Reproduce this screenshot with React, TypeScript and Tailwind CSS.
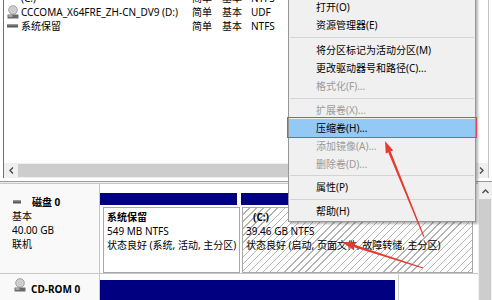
import React from "react";

type Volume = { name: string; layout: string; type: string; fs: string; icon: "disk" | "cd" };

const volumes: Volume[] = [
  { name: "(C:)", layout: "简单", type: "基本", fs: "NTFS", icon: "disk" },
  { name: "CCCOMA_X64FRE_ZH-CN_DV9 (D:)", layout: "简单", type: "基本", fs: "UDF", icon: "cd" },
  { name: "系统保留", layout: "简单", type: "基本", fs: "NTFS", icon: "disk" },
];

type MenuEntry = { label?: string; disabled?: boolean; active?: boolean; sep?: string };

const menu: MenuEntry[] = [
  { label: "打开(O)" },
  { label: "资源管理器(E)" },
  { sep: "h-[7px]" },
  { label: "将分区标记为活动分区(M)" },
  { label: "更改驱动器号和路径(C)..." },
  { label: "格式化(F)...", disabled: true },
  { sep: "h-[6px]" },
  { label: "扩展卷(X)...", disabled: true },
  { label: "压缩卷(H)...", active: true },
  { label: "添加镜像(A)...", disabled: true },
  { label: "删除卷(D)...", disabled: true },
  { sep: "h-[5px]" },
  { label: "属性(P)" },
  { sep: "h-[6px]" },
  { label: "帮助(H)" },
];

function CdIcon() {
  return (
    <svg width="12" height="14" viewBox="0 0 12 14">
      <circle cx="6" cy="5" r="4.3" fill="#d2d2d2" stroke="#8c8c8c" strokeWidth="0.8" />
      <circle cx="6" cy="5" r="1.2" fill="#fff" stroke="#8c8c8c" strokeWidth="0.5" />
      <rect x="0.5" y="9.5" width="11" height="4" rx="0.5" fill="#6a6a6a" />
      <rect x="1.5" y="10.5" width="4" height="1" fill="#e4e4e4" />
    </svg>
  );
}

function DiskIcon({ w = 11 }: { w?: number }) {
  return (
    <svg width={w} height="4" viewBox={`0 0 ${w} 4`}>
      <rect x="0" y="0.5" width={w} height="3" fill="#5a5a5a" />
      <rect x="0" y="0.5" width={w} height="1" fill="#8a8a8a" />
    </svg>
  );
}

function Chevron({ dir }: { dir: "left" | "right" | "up" }) {
  const pts = dir === "left" ? "4,0.5 1,3.5 4,6.5" : dir === "right" ? "1,0.5 4,3.5 1,6.5" : "0.5,4 3.5,1 6.5,4";
  const size = dir === "up" ? { w: 7, h: 5 } : { w: 5, h: 7 };
  return (
    <svg width={size.w} height={size.h} viewBox={`0 0 ${size.w} ${size.h}`}>
      <polyline points={pts} fill="none" stroke="#4a4a4a" strokeWidth="1.4" />
    </svg>
  );
}

export default function App() {
  return (
    <div className="relative w-[492px] h-[300px] overflow-hidden bg-white text-[10px] leading-none text-black font-['Noto_Sans','Noto_Sans_CJK_SC',sans-serif]">
      {/* volume list */}
      <div className="ml-[3px] mr-[3px] h-[178px] flex flex-col border-l border-l-[#6f6f6f] border-r border-r-[#c4c4c4]">
        <div className="flex-1 overflow-hidden">
          <div className="-mt-[9px]">
            {volumes.map((v) => (
              <div key={v.name} className="flex h-[14px] items-center">
                <div className="w-[17px] pl-[3px] flex items-center">
                  {v.icon === "cd" ? <CdIcon /> : <DiskIcon />}
                </div>
                <span className="w-[171px] whitespace-nowrap">{v.name}</span>
                <span className="w-[30px]">{v.layout}</span>
                <span className="w-[29px]">{v.type}</span>
                <span>{v.fs}</span>
              </div>
            ))}
          </div>
        </div>
        {/* horizontal scrollbar */}
        <div className="flex h-[15px] items-stretch bg-[#f0f0f0]">
          <div className="w-[14px] flex items-center justify-center">
            <Chevron dir="left" />
          </div>
          <div className="flex-1 my-[1px] bg-[#cdcdcd]" />
          <div className="w-[14px] ml-[8px] flex items-center justify-center">
            <Chevron dir="right" />
          </div>
        </div>
      </div>

      {/* splitter */}
      <div className="h-[5px] flex flex-col">
        <div className="h-[3px] bg-white" />
        <div className="h-[1px] bg-[#9c9c9c]" />
        <div className="h-[1px] bg-[#eeeeee]" />
      </div>

      {/* disk graphical view */}
      <div className="flex h-[117px]">
        <div className="w-[478px] flex flex-col border-t border-[#c8c8c8]">
          {/* disk 0 */}
          <div className="h-[95px] flex border-b border-[#c8c8c8]">
            <div className="w-[100px] border-r border-[#c8c8c8] bg-[#f9f9f9] pt-[11px] leading-[14px]">
              <div className="flex items-center pl-[13px]">
                <DiskIcon w={8} />
                <span className="ml-[11px] font-bold">磁盘 0</span>
              </div>
              <div className="pl-[12px]">基本</div>
              <div className="pl-[12px]">40.00 GB</div>
              <div className="pl-[12px]">联机</div>
            </div>
            <div className="flex-1 flex pt-[9px]">
              <div className="w-[140px] flex flex-col">
                <div className="h-[12px] mr-[3px] bg-[#000080]" />
                <div className="mt-[2px] ml-[3px] h-[66px] border border-[#a8a8a8] bg-white pt-[2px] pl-[3px] leading-[14px] whitespace-nowrap overflow-hidden">
                  <div className="font-bold">系统保留</div>
                  <div>549 MB NTFS</div>
                  <div>状态良好 (系统, 活动, 主分区)</div>
                </div>
              </div>
              <div className="flex-1 flex flex-col">
                <div className="h-[12px] ml-[1px] mr-[2px] bg-[#000080]" />
                <div className="mt-[2px] ml-[2px] mr-[5px] h-[66px] border border-[#a8a8a8] pt-[2px] pl-[3px] leading-[14px] whitespace-nowrap overflow-hidden bg-[repeating-linear-gradient(135deg,#ffffff_0px,#ffffff_4px,#b4b4b4_4px,#b4b4b4_5px)]">
                  <div className="font-bold pl-[7px]">(C:)</div>
                  <div>39.46 GB NTFS</div>
                  <div>状态良好 (启动, 页面文件, 故障转储, 主分区)</div>
                </div>
              </div>
            </div>
          </div>
          {/* cd-rom 0 */}
          <div className="flex-1 flex">
            <div className="w-[100px] border-r border-[#c8c8c8] bg-[#f9f9f9] pt-[4px] pl-[14px] flex items-start">
              <CdIcon />
              <span className="ml-[5px] mt-[6px] font-bold">CD-ROM 0</span>
            </div>
            <div className="w-[299px] border-r border-[#d0d0d0] pt-[6px] pr-[3px]">
              <div className="h-[20px] bg-[#000080]" />
            </div>
          </div>
        </div>
        {/* vertical scrollbar */}
        <div className="w-[14px] flex flex-col bg-[#f0f0f0]">
          <div className="h-[16px] flex items-center justify-center">
            <Chevron dir="up" />
          </div>
          <div className="flex-1 mx-[1px] bg-[#cdcdcd]" />
        </div>
      </div>

      {/* context menu */}
      <div className="absolute left-[288px] top-[-3px] w-[188px] border border-[#979797] bg-[#f0f0f0] pb-[1px] shadow-[2px_2px_2px_rgba(0,0,0,0.28)]">
        {menu.map((m, i) =>
          m.sep ? (
            <div key={i} className={`${m.sep} flex items-center px-[1px]`}>
              <div className="h-[1px] w-full bg-[#d4d4d4]" />
            </div>
          ) : (
            <div
              key={i}
              className={`relative h-[18px] flex items-center pl-[27px] whitespace-nowrap ${m.active ? "bg-[#94c9f6]" : ""} ${m.disabled ? "text-[#9b9b9b]" : ""}`}
            >
              {m.label}
              {m.active && <div className="absolute -left-[2px] -right-[2px] -top-[2px] -bottom-[1px] border-[1.5px] border-[#e0474c]" />}
            </div>
          )
        )}
      </div>

      {/* red annotation arrows */}
      <svg className="absolute inset-0 pointer-events-none" width="492" height="300" viewBox="0 0 492 300">
        <polygon points="424.5,236.8 423.5,237.2 388.3,152.6 390.7,151.6" fill="#e8392f" />
        <polygon points="385,141 393.2,150.6 385.8,153.6" fill="#e8392f" />
        <polygon points="423.15,267.5 422.85,268.5 354.0,247.2 354.8,244.8" fill="#e8392f" />
        <polygon points="342,242 355.6,242.2 353.2,249.8" fill="#e8392f" />
      </svg>
    </div>
  );
}
